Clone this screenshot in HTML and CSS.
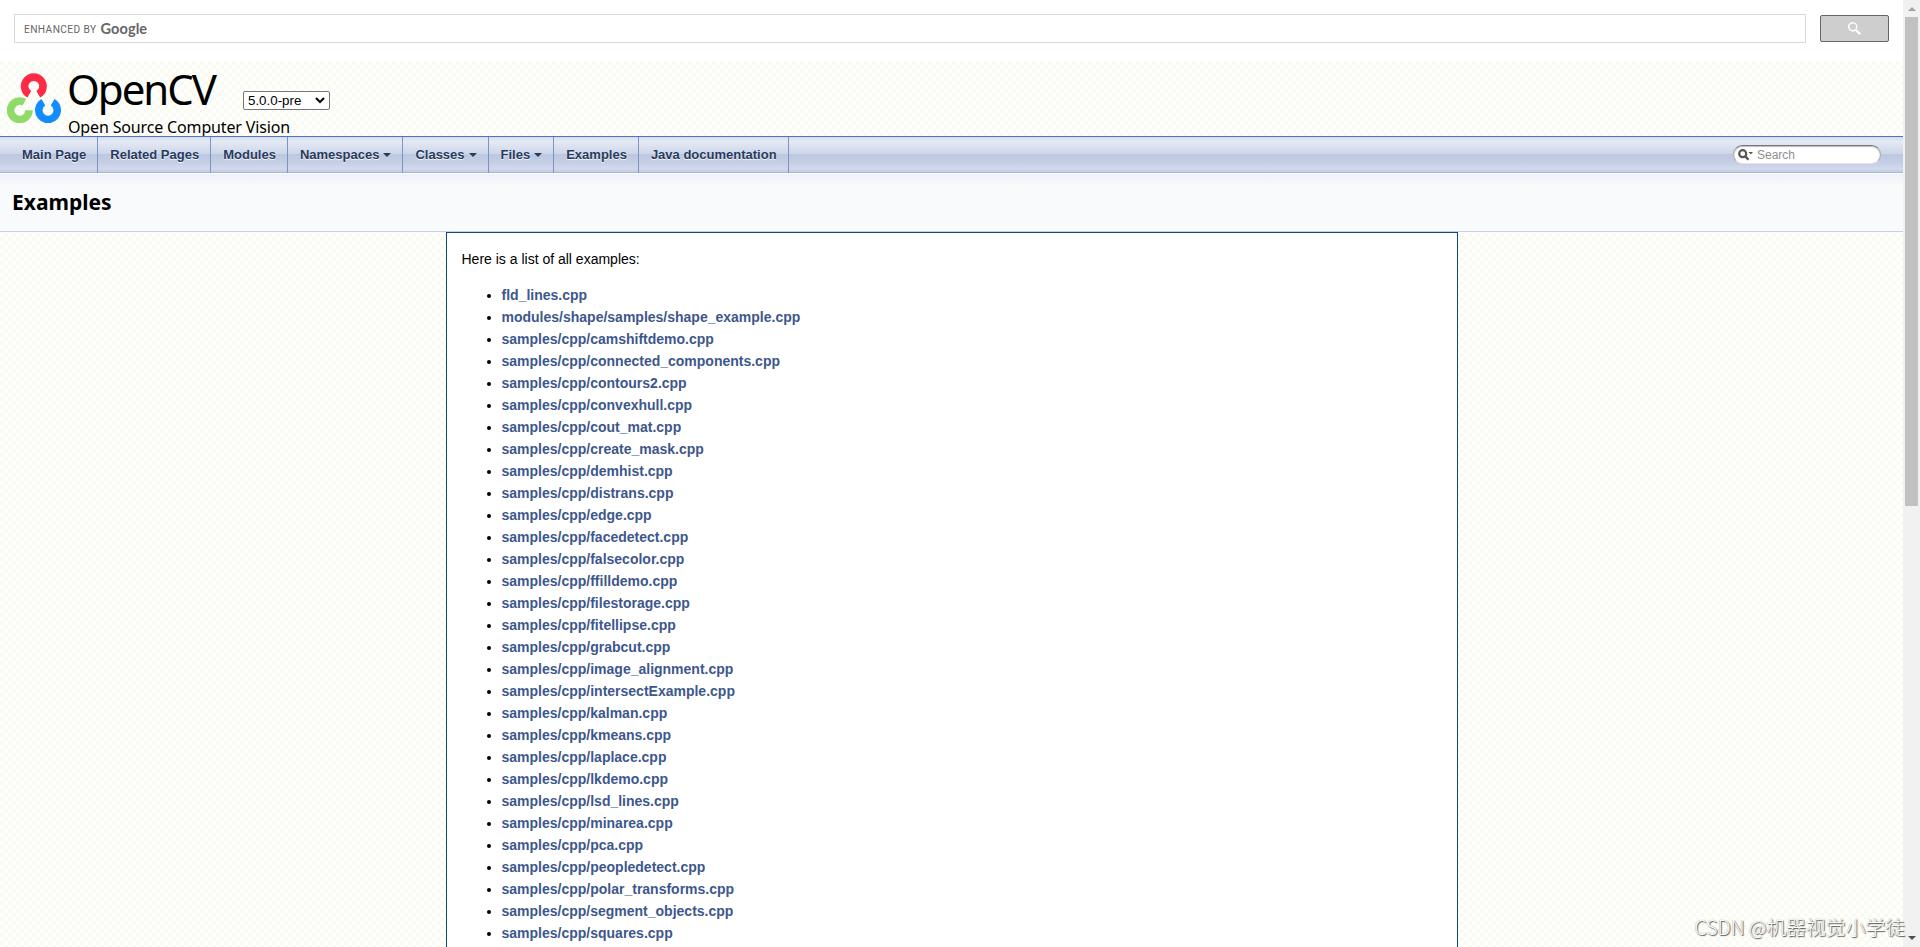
FILE: index.html
```
<!DOCTYPE html>
<html lang="en">
<head>
    <meta charset="UTF-8">
    <meta name="viewport" content="width=device-width, initial-scale=1.0">
    <title>OpenCV: Examples</title>
    <link rel="stylesheet" href="styles.css">
</head>
<body>
    <div id="page">
        <!-- Google search -->
        <div class="gsearch">
            <div class="gsearch-input"><span class="enhanced">ENHANCED BY</span><span class="google">Google</span></div>
            <button class="gsearch-btn" title="search">
                <svg width="13" height="13" viewBox="0 0 13 13"><path fill="#fff" d="M4.800 0a4.800 4.800 0 1 0 2.800 8.700l.3.3v.8L11.600 13 13 11.600 9.500 8h-.7l-.3-.4A4.800 4.800 0 0 0 4.800 0zm0 1.600a3.200 3.200 0 1 1 0 6.400 3.200 3.200 0 0 1 0-6.400z"/></svg>
            </button>
        </div>

        <!-- Title area -->
        <div id="titlearea">
            <svg class="logo" width="54" height="50" viewBox="0 0 54 50">
                <g fill="none" stroke-width="7.600">
                    <path stroke="#ff2a44" d="M22.300 21.300A9.200 9.200 0 1 1 31.300 21.300"/>
                    <path stroke="#8fdb69" d="M17.400 29.300A9.200 9.200 0 1 0 22 37.300"/>
                    <path stroke="#128dff" d="M36.400 29.300A9.200 9.200 0 1 0 45.600 29.300"/>
                </g>
            </svg>
            <div class="project">
                <div class="project-row">
                    <span id="projectname">OpenCV</span>
                    <span class="version">5.0.0-pre<svg width="10" height="7" viewBox="0 0 10 7"><path d="M1 1l4 4 4-4" fill="none" stroke="#000" stroke-width="2"/></svg></span>
                </div>
                <div id="projectbrief">Open Source Computer Vision</div>
            </div>
        </div>

        <!-- Menu -->
        <div id="main-nav">
            <ul class="menu">
                <li>Main Page</li>
                <li>Related Pages</li>
                <li>Modules</li>
                <li class="sub">Namespaces</li>
                <li class="sub">Classes</li>
                <li class="sub">Files</li>
                <li>Examples</li>
                <li>Java documentation</li>
            </ul>
            <div class="searchbox">
                <svg width="16" height="12" viewBox="0 0 16 12"><circle cx="4.700" cy="4.700" r="3.500" fill="none" stroke="#555" stroke-width="2.200"/><path d="M7.200 7.200l3.300 3.500" stroke="#555" stroke-width="2.400"/><path d="M10.500 3h4.500l-2.250 2.500z" fill="#555"/></svg>
                <span>Search</span>
            </div>
        </div>

        <div class="header">
            <div class="title">Examples</div>
        </div>

        <div class="contents">
            <p>Here is a list of all examples:</p>
            <ul>
                <li><a>fld_lines.cpp</a></li>
                <li><a>modules/shape/samples/shape_example.cpp</a></li>
                <li><a>samples/cpp/camshiftdemo.cpp</a></li>
                <li><a>samples/cpp/connected_components.cpp</a></li>
                <li><a>samples/cpp/contours2.cpp</a></li>
                <li><a>samples/cpp/convexhull.cpp</a></li>
                <li><a>samples/cpp/cout_mat.cpp</a></li>
                <li><a>samples/cpp/create_mask.cpp</a></li>
                <li><a>samples/cpp/demhist.cpp</a></li>
                <li><a>samples/cpp/distrans.cpp</a></li>
                <li><a>samples/cpp/edge.cpp</a></li>
                <li><a>samples/cpp/facedetect.cpp</a></li>
                <li><a>samples/cpp/falsecolor.cpp</a></li>
                <li><a>samples/cpp/ffilldemo.cpp</a></li>
                <li><a>samples/cpp/filestorage.cpp</a></li>
                <li><a>samples/cpp/fitellipse.cpp</a></li>
                <li><a>samples/cpp/grabcut.cpp</a></li>
                <li><a>samples/cpp/image_alignment.cpp</a></li>
                <li><a>samples/cpp/intersectExample.cpp</a></li>
                <li><a>samples/cpp/kalman.cpp</a></li>
                <li><a>samples/cpp/kmeans.cpp</a></li>
                <li><a>samples/cpp/laplace.cpp</a></li>
                <li><a>samples/cpp/lkdemo.cpp</a></li>
                <li><a>samples/cpp/lsd_lines.cpp</a></li>
                <li><a>samples/cpp/minarea.cpp</a></li>
                <li><a>samples/cpp/pca.cpp</a></li>
                <li><a>samples/cpp/peopledetect.cpp</a></li>
                <li><a>samples/cpp/polar_transforms.cpp</a></li>
                <li><a>samples/cpp/segment_objects.cpp</a></li>
                <li><a>samples/cpp/squares.cpp</a></li>
            </ul>
        </div>
    </div>

    <!-- Scrollbar -->
    <div class="scrollbar">
        <span class="arrow up"></span>
        <div class="thumb"></div>
        <span class="arrow down"></span>
    </div>

    <div class="watermark"><span>CSDN @</span>机器视觉小学徒</div>
</body>
</html>
```
FILE: styles.css
```
* {
    box-sizing: border-box;
}

body {
    margin: 0;
    display: flex;
    height: 947px;
    overflow: hidden;
    font: 14px/22px "Liberation Sans", Arial, sans-serif;
    color: #000;
}

#page {
    flex: 1;
    display: flex;
    flex-direction: column;
    overflow: hidden;
    background: #fffffd repeating-conic-gradient(#f9faf1 0 25%, #fffffd 0 50%) 0 1px / 8px 8px;
}

/* Google search */
.gsearch {
    flex: none;
    display: flex;
    align-items: center;
    gap: 14px;
    height: 61px;
    padding: 0 14px 4px;
    background: #fff;
}

.gsearch-input {
    flex: 1;
    display: flex;
    align-items: center;
    gap: 4px;
    height: 29px;
    padding-left: 9px;
    border: 1px solid #d9d9d9;
    color: #666;
}

.enhanced {
    font: 10.2px/27px Roboto, sans-serif;
    letter-spacing: 0.4px;
    padding-top: 2px;
}

.google {
    font: bold 14.5px/27px Lato, sans-serif;
    letter-spacing: 0.1px;
}

.gsearch-btn {
    width: 69px;
    height: 27px;
    padding: 0;
    border: 1px solid #666;
    border-radius: 2px;
    background: #cecece;
}

.gsearch-btn svg {
    display: block;
    margin: -1px auto 0;
}

/* Title area */
#titlearea {
    flex: none;
    display: flex;
    height: 76px;
    overflow: hidden;
    border-bottom: 1px solid #5373b4;
}

.logo {
    flex: none;
    margin: 12px 7px 0;
}

.project-row {
    display: flex;
    align-items: flex-start;
    height: 57px;
}

#projectname {
    width: 175px;
    margin-left: -1px;
    margin-right: 1px;
    font: 42px/56px "Noto Sans", Tahoma, sans-serif;
    letter-spacing: -2px;
    white-space: nowrap;
}

.version {
    display: flex;
    align-items: center;
    justify-content: space-between;
    width: 87px;
    height: 19px;
    margin-top: 30px;
    padding: 0 4px;
    border: 1px solid #767676;
    border-radius: 2px;
    background: #fff;
    font-size: 13.333px;
    line-height: 17px;
}

#projectbrief {
    font: 16px/19px "Noto Sans", Tahoma, sans-serif;
    letter-spacing: -0.15px;
    white-space: nowrap;
}

/* Menu */
#main-nav {
    flex: none;
    display: flex;
    justify-content: space-between;
    align-items: flex-start;
    height: 36px;
    padding: 0 22px 0 10px;
    border-bottom: 1px solid #a9b8d8;
    background: linear-gradient(#d3dcec, #e5eaf4 12%, #ccd6e9 49%, #bcc8e1 50%, #c5cfe6 75%, #d3daec 91%, #c0cbe2);
}

.menu {
    display: flex;
    margin: 0;
    padding: 0;
    list-style: none;
}

.menu li {
    height: 36px;
    padding: 0 11px 0 12px;
    border-right: 1px solid #7c93c5;
    color: #283a5d;
    font-size: 13px;
    font-weight: bold;
    line-height: 36px;
    text-shadow: 0 1px 1px rgba(255, 255, 255, 0.9);
    white-space: nowrap;
}

.menu li.sub::after {
    content: "";
    display: inline-block;
    margin-left: 4px;
    vertical-align: 2px;
    border: 4px solid transparent;
    border-top-color: #283a5d;
    border-bottom: 0;
}

.searchbox {
    display: flex;
    align-items: center;
    gap: 3px;
    width: 148px;
    height: 19px;
    margin-top: 8px;
    padding-left: 4px;
    border: 1px solid #aaa;
    border-top: 1px solid #777;
    border-bottom-color: #e3e3e3;
    border-radius: 10px;
    background: #fff;
    box-shadow: inset 0 1px 1px #bbb;
    color: #909090;
    font-size: 12px;
    line-height: 17px;
}

.searchbox span {
    padding-top: 1px;
}

.header {
    flex: none;
    height: 59px;
    border-bottom: 1px solid #c4cfe5;
    background: linear-gradient(#fff 1px, #eef1f7 1px, #f9fafc 13px);
}

.title {
    padding: 15px 12px;
    font: bold 21px/28px "Noto Sans", Tahoma, sans-serif;
}

.contents {
    flex: none;
    width: 1012px;
    height: 900px;
    margin: 0 auto;
    padding: 15px;
    border: 1px solid #0c4b7a;
    background: #fff;
}

.contents p {
    margin: 0 0 14px;
}

.contents ul {
    margin: 0;
    padding-left: 40px;
}

.contents a {
    color: #3d578c;
    font-weight: bold;
}

/* Scrollbar */
.scrollbar {
    display: flex;
    flex-direction: column;
    align-items: center;
    width: 17px;
    background: #f1f1f1;
}

.thumb {
    width: 13px;
    height: 489px;
    margin-top: 6px;
    margin-bottom: auto;
    background: #c1c1c1;
}

.arrow {
    border: 4px solid transparent;
}

.up {
    margin-top: 3px;
    border-bottom-color: #a3a3a3;
}

.down {
    margin-bottom: 3px;
    border-top-color: #505050;
}

.watermark {
    position: absolute;
    right: 15px;
    bottom: 7px;
    color: #fff;
    font: 300 19.8px/26px "Noto Sans CJK SC", sans-serif;
    text-shadow: 1px 1px 1px #555, 0 0 1px #888;
}

.watermark span {
    font-size: 19.5px;
}
```
